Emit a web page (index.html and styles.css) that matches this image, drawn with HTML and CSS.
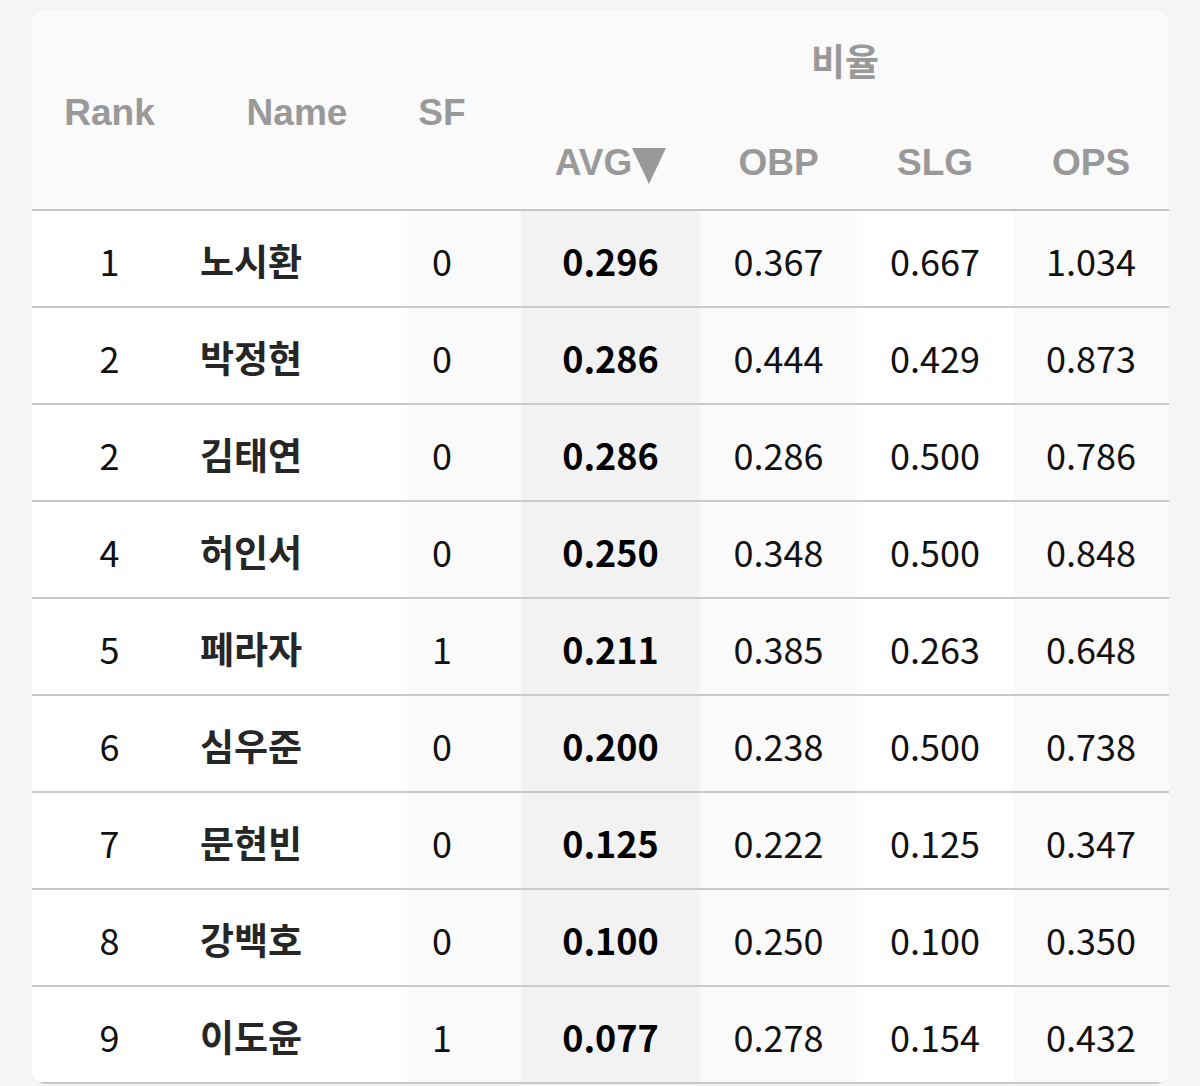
FILE: index.html
```html
<!DOCTYPE html>
<html lang="ko">
<head>
<meta charset="utf-8">
<title>비율 순위</title>
<link rel="stylesheet" href="styles.css">
</head>
<body>
<div class="card">
  <table class="stats">
    <colgroup>
      <col class="c-rank"><col class="c-name"><col class="c-sf"><col class="c-avg"><col class="c-obp"><col class="c-slg"><col class="c-ops">
    </colgroup>
    <thead>
      <tr class="hr1">
        <th rowspan="2" class="h-rank">Rank</th>
        <th rowspan="2" class="h-name">Name</th>
        <th rowspan="2" class="h-sf">SF</th>
        <th colspan="4" class="h-group">비율</th>
      </tr>
      <tr class="hr2">
        <th class="h-stat">AVG<svg class="sort" width="34" height="36" viewBox="0 0 34 36"><path d="M0 0 H34 L17 36 Z" fill="#999"/></svg></th>
        <th class="h-stat">OBP</th>
        <th class="h-stat">SLG</th>
        <th class="h-stat">OPS</th>
      </tr>
    </thead>
    <tbody>
      <tr><td class="rank">1</td><td class="name">노시환</td><td class="sf">0</td><td class="avg">0.296</td><td class="obp">0.367</td><td class="slg">0.667</td><td class="ops">1.034</td></tr>
      <tr><td class="rank">2</td><td class="name">박정현</td><td class="sf">0</td><td class="avg">0.286</td><td class="obp">0.444</td><td class="slg">0.429</td><td class="ops">0.873</td></tr>
      <tr><td class="rank">2</td><td class="name">김태연</td><td class="sf">0</td><td class="avg">0.286</td><td class="obp">0.286</td><td class="slg">0.500</td><td class="ops">0.786</td></tr>
      <tr><td class="rank">4</td><td class="name">허인서</td><td class="sf">0</td><td class="avg">0.250</td><td class="obp">0.348</td><td class="slg">0.500</td><td class="ops">0.848</td></tr>
      <tr><td class="rank">5</td><td class="name">페라자</td><td class="sf">1</td><td class="avg">0.211</td><td class="obp">0.385</td><td class="slg">0.263</td><td class="ops">0.648</td></tr>
      <tr><td class="rank">6</td><td class="name">심우준</td><td class="sf">0</td><td class="avg">0.200</td><td class="obp">0.238</td><td class="slg">0.500</td><td class="ops">0.738</td></tr>
      <tr><td class="rank">7</td><td class="name">문현빈</td><td class="sf">0</td><td class="avg">0.125</td><td class="obp">0.222</td><td class="slg">0.125</td><td class="ops">0.347</td></tr>
      <tr><td class="rank">8</td><td class="name">강백호</td><td class="sf">0</td><td class="avg">0.100</td><td class="obp">0.250</td><td class="slg">0.100</td><td class="ops">0.350</td></tr>
      <tr><td class="rank">9</td><td class="name">이도윤</td><td class="sf">1</td><td class="avg">0.077</td><td class="obp">0.278</td><td class="slg">0.154</td><td class="ops">0.432</td></tr>
    </tbody>
  </table>
</div>
</body>
</html>
```

FILE: styles.css
```css
html, body {
  margin: 0;
  padding: 0;
  background: #f4f5f7;
}
body {
  padding: 10px 31px 40px 32px;
  font-family: "Noto Sans CJK KR", "Noto Sans", sans-serif;
}
.card {
  width: 1137px;
  background: #fafafa;
  border-radius: 14px;
  overflow: hidden;
  box-shadow: 0 0 2px rgba(0, 0, 0, 0.04);
}
.stats {
  width: 1137px;
  border-collapse: separate;
  border-spacing: 0;
  table-layout: fixed;
}
.c-rank { width: 155px; }
.c-name { width: 220px; }
.c-sf { width: 114px; }
.c-avg { width: 179px; }
.c-obp { width: 157px; }
.c-slg { width: 156px; }
.c-ops { width: 156px; }

.stats th {
  font-family: "Liberation Sans", "Noto Sans CJK KR", sans-serif;
  font-weight: 700;
  font-size: 37px;
  color: #999999;
  background: #fafafa;
  padding: 0;
  text-align: center;
  vertical-align: middle;
  white-space: nowrap;
}
.hr1 th.h-group {
  font-family: "Noto Sans CJK KR", sans-serif;
  height: 104px;
  font-size: 37px;
  padding-bottom: 4px;
  box-sizing: border-box;
}
.hr2 th {
  height: 97px;
  padding-top: 2px;
  box-sizing: border-box;
}
.h-rank, .h-name, .h-sf {
  padding-top: 6px !important;
}
.stats thead th {
  border-bottom: 2px solid #c6c6c6;
}
.stats thead .hr1 th.h-group {
  border-bottom: none;
}
.h-sf { padding-right: 44px !important; }
.sort {
  display: inline-block;
  vertical-align: -9px;
  margin-left: 0;
}

.stats td {
  height: 97px;
  box-sizing: border-box;
  padding: 2px 0 0;
  border-bottom: 2px solid #c9c9c9;
  font-size: 36px;
  color: #111111;
  text-align: center;
  vertical-align: middle;
  background: #ffffff;
  white-space: nowrap;
}
.stats td.name {
  text-align: left;
  padding-left: 13px;
  font-size: 37px;
  font-weight: 700;
  color: #262626;
}
.stats td.sf {
  background: #fafafa;
  padding-right: 44px;
}
.stats td.avg {
  background: #f2f2f2;
  font-weight: 700;
  color: #000000;
}
.stats td.obp { background: #fafafa; }
.stats td.slg { background: #ffffff; }
.stats td.ops { background: #fafafa; }
```
